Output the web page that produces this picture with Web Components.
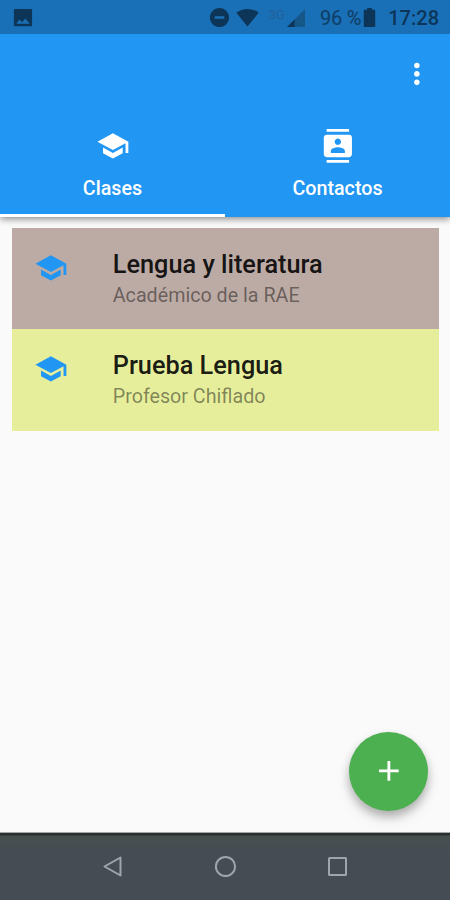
<!DOCTYPE html>
<html lang="es">
<head>
<meta charset="utf-8">
<title>Clases</title>
<style>
    body {
        margin: 0;
        font-family: Roboto, "Liberation Sans", sans-serif;
    }
</style>
</head>
<body>
<class-app></class-app>

<script>
// Paths on a 24x24 grid
const ICONS = {
    image: 'M22 20V4c0-.6-.4-1-1-1H4c-.6 0-1 .4-1 1v16c0 .6.4 1 1 1h17c.6 0 1-.4 1-1zM9 14l2.5 3L15 13l4.5 5.5H5.5L9 14z',
    school: 'M5 13.18v4L12 21l7-3.82v-4L12 17l-7-3.82zM12 3L1 9l11 6 9-4.91V17h2V9L12 3z',
    contacts: 'M20 0H4v2h16V0zM4 24h16v-2H4v2zM20 4H4c-1.1 0-2 .9-2 2v12c0 1.1.9 2 2 2h16c1.1 0 2-.9 2-2V6c0-1.1-.9-2-2-2zm-8 2.75c1.24 0 2.25 1.01 2.25 2.25s-1.01 2.25-2.25 2.25S9.75 10.24 9.75 9 10.76 6.75 12 6.75zM17 17H7v-1.5c0-1.67 3.33-2.5 5-2.5s5 .83 5 2.5V17z',
    more: 'M12 8c1.1 0 2-.9 2-2s-.9-2-2-2-2 .9-2 2 .9 2 2 2zm0 2c-1.1 0-2 .9-2 2s.9 2 2 2 2-.9 2-2-.9-2-2-2zm0 6c-1.1 0-2 .9-2 2s.9 2 2 2 2-.9 2-2-.9-2-2-2z',
    add: 'M19 13h-6v6h-2v-6H5v-2h6V5h2v6h6v2z',
    dnd: 'M12 2C6.48 2 2 6.48 2 12s4.48 10 10 10 10-4.48 10-10S17.52 2 12 2zm5 11.3H7v-2.6h10v2.6z',
    wifi: 'M12.01 21.49L23.64 7c-.45-.34-4.93-4-11.64-4C5.28 3 .81 6.66.36 7l11.63 14.49.01.01.01-.01z',
    battery: 'M17 4H14.5V2h-5v2H7C6.4 4 6 4.6 6 5.33v15.33C6 21.4 6.6 22 7.33 22h9.33c.74 0 1.34-.6 1.34-1.33V5.33C18 4.6 17.6 4 17 4z'
};

class MdIcon extends HTMLElement {
    constructor() {
        super();
        this.attachShadow({ mode: 'open' });
    }

    connectedCallback() {
        this.shadowRoot.innerHTML = `
            <style>
                :host {
                    display: block;
                    flex: none;
                    width: 33.75px;
                    height: 33.75px;
                }
                svg {
                    display: block;
                    width: 100%;
                    height: 100%;
                    fill: currentColor;
                }
            </style>
            <svg viewBox="0 0 24 24"><path d="${ICONS[this.getAttribute('name')]}"/></svg>
        `;
    }
}

class StatusBar extends HTMLElement {
    constructor() {
        super();
        this.attachShadow({ mode: 'open' });
    }

    connectedCallback() {
        this.shadowRoot.innerHTML = `
            <style>
                :host {
                    display: flex;
                    align-items: center;
                    box-sizing: border-box;
                    height: 34px;
                    padding: 1px 11px 0 11px;
                    background-color: #1a70b7;
                    color: #0c3557;
                    font-size: 20px;
                    line-height: 33px;
                    position: relative;
                    z-index: 2;
                }
                md-icon {
                    width: 23px;
                    height: 23px;
                }
                .spacer {
                    flex: 1;
                }
                .wifi {
                    width: 23px;
                    margin-left: 5px;
                }
                .network {
                    align-self: flex-start;
                    margin: 5px 0 0 10px;
                    font-size: 13px;
                    line-height: 18px;
                    color: #235f97;
                }
                .signal {
                    width: 18px;
                    height: 18px;
                    margin-left: 2px;
                }
                .percent {
                    margin-left: 15px;
                    padding-top: 2px;
                    letter-spacing: -0.2px;
                    white-space: nowrap;
                    color: #0f406a;
                    -webkit-text-stroke: 0.2px currentColor;
                }
                .battery {
                    margin-left: -3px;
                }
                .time {
                    margin-left: 7px;
                    padding-top: 2px;
                    font-weight: 500;
                }
            </style>
            <md-icon name="image"></md-icon>
            <div class="spacer"></div>
            <md-icon name="dnd"></md-icon>
            <md-icon class="wifi" name="wifi"></md-icon>
            <span class="network">3G</span>
            <svg class="signal" viewBox="0 0 19 19">
                <path d="M19 0V19H0z" fill="#155789"/>
                <path d="M8 11V19H0z" fill="#0c3557"/>
            </svg>
            <span class="percent">96 %</span>
            <md-icon class="battery" name="battery"></md-icon>
            <span class="time">17:28</span>
        `;
    }
}

class TabItem extends HTMLElement {
    constructor() {
        super();
        this.attachShadow({ mode: 'open' });
    }

    connectedCallback() {
        this.shadowRoot.innerHTML = `
            <style>
                :host {
                    flex: 1;
                    display: flex;
                    flex-direction: column;
                    align-items: center;
                    box-sizing: border-box;
                    height: 101px;
                    padding-top: 13px;
                    border-bottom: 3px solid transparent;
                    color: #fff;
                    font-size: 19.7px;
                    font-weight: 500;
                    line-height: 24px;
                }
                :host([active]) {
                    border-bottom-color: #fff;
                }
                span {
                    margin-top: 14px;
                }
            </style>
            <md-icon name="${this.getAttribute('icon')}"></md-icon>
            <span><slot></slot></span>
        `;
    }
}

class AppHeader extends HTMLElement {
    constructor() {
        super();
        this.attachShadow({ mode: 'open' });
    }

    connectedCallback() {
        this.shadowRoot.innerHTML = `
            <style>
                :host {
                    display: block;
                    background-color: #2196f3;
                    box-shadow: 0 2px 7px rgba(0,0,0,0.45);
                    z-index: 1;
                }
                .toolbar {
                    display: flex;
                    justify-content: flex-end;
                    align-items: center;
                    height: 79px;
                    padding-right: 16px;
                    box-sizing: border-box;
                    color: #fff;
                }
                .tabs {
                    display: flex;
                    margin-top: 3px;
                }
            </style>
            <div class="toolbar"><md-icon name="more"></md-icon></div>
            <div class="tabs"><slot></slot></div>
        `;
    }
}

class ClassRow extends HTMLElement {
    constructor() {
        super();
        this.attachShadow({ mode: 'open' });
    }

    connectedCallback() {
        this.shadowRoot.innerHTML = `
            <style>
                :host {
                    display: flex;
                    box-sizing: border-box;
                    height: 101px;
                    padding: 22px 22px 0;
                    background-color: var(--row-color);
                }
                md-icon {
                    margin-top: 1px;
                    color: #2196f3;
                }
                .text {
                    margin-left: 45px;
                }
                .title {
                    font-size: 25.3px;
                    font-weight: 500;
                    line-height: 29px;
                    color: rgba(0,0,0,0.9);
                }
                .subtitle {
                    font-size: 19.7px;
                    line-height: 24px;
                    margin-top: 5px;
                    color: rgba(0,0,0,0.46);
                }
            </style>
            <md-icon name="school"></md-icon>
            <div class="text">
                <div class="title"><slot></slot></div>
                <div class="subtitle"><slot name="teacher"></slot></div>
            </div>
        `;
    }
}

class FabButton extends HTMLElement {
    constructor() {
        super();
        this.attachShadow({ mode: 'open' });
    }

    connectedCallback() {
        this.shadowRoot.innerHTML = `
            <style>
                :host {
                    display: flex;
                    align-items: center;
                    justify-content: center;
                    width: 79px;
                    height: 79px;
                    border-radius: 50%;
                    background-color: #4caf50;
                    color: #fff;
                    box-shadow: 0 5px 8px rgba(0,0,0,0.22), 0 8px 14px rgba(0,0,0,0.12);
                }
            </style>
            <md-icon name="add"></md-icon>
        `;
    }
}

class NavBar extends HTMLElement {
    constructor() {
        super();
        this.attachShadow({ mode: 'open' });
    }

    connectedCallback() {
        this.shadowRoot.innerHTML = `
            <style>
                :host {
                    display: flex;
                    justify-content: center;
                    gap: 88.5px;
                    box-sizing: border-box;
                    height: 68px;
                    padding: 20px 1px 0 0;
                    border-top: 1px solid #a3a9a9;
                    background: linear-gradient(#293130 0 2px, #46504f 3px, #454c54 18px);
                }
                svg {
                    width: 24px;
                    height: 24px;
                    fill: none;
                    stroke: #a0a5ad;
                    stroke-width: 2;
                    stroke-linejoin: round;
                }
            </style>
            <svg viewBox="0 0 24 24"><path d="M20.5 4.5V22.5L4.5 13.5z"/></svg>
            <svg viewBox="0 0 24 24"><circle cx="12.5" cy="13.5" r="9.6"/></svg>
            <svg viewBox="0 0 24 24"><rect x="4" y="5" width="17" height="17" rx="0.5"/></svg>
        `;
    }
}

class ClassApp extends HTMLElement {
    constructor() {
        super();
        this.attachShadow({ mode: 'open' });
    }

    connectedCallback() {
        this.shadowRoot.innerHTML = `
            <style>
                :host {
                    display: flex;
                    flex-direction: column;
                    width: 450px;
                    height: 900px;
                    overflow: hidden;
                    background-color: #fafafa;
                }
                main {
                    position: relative;
                    flex: 1;
                    padding: 11.4px 11px 0 12px;
                }
                .brown {
                    --row-color: #bcaaa4;
                }
                .lime {
                    --row-color: #e6ee9c;
                    height: 102px;
                }
                fab-button {
                    position: absolute;
                    right: 22px;
                    bottom: 21.5px;
                }
            </style>
            <status-bar></status-bar>
            <app-header>
                <tab-item icon="school" active>Clases</tab-item>
                <tab-item icon="contacts">Contactos</tab-item>
            </app-header>
            <main>
                <class-row class="brown">Lengua y literatura<span slot="teacher">Académico de la RAE</span></class-row>
                <class-row class="lime">Prueba Lengua<span slot="teacher">Profesor Chiflado</span></class-row>
                <fab-button></fab-button>
            </main>
            <nav-bar></nav-bar>
        `;
    }
}

customElements.define('md-icon', MdIcon);
customElements.define('status-bar', StatusBar);
customElements.define('tab-item', TabItem);
customElements.define('app-header', AppHeader);
customElements.define('class-row', ClassRow);
customElements.define('fab-button', FabButton);
customElements.define('nav-bar', NavBar);
customElements.define('class-app', ClassApp);
</script>
</body>
</html>
